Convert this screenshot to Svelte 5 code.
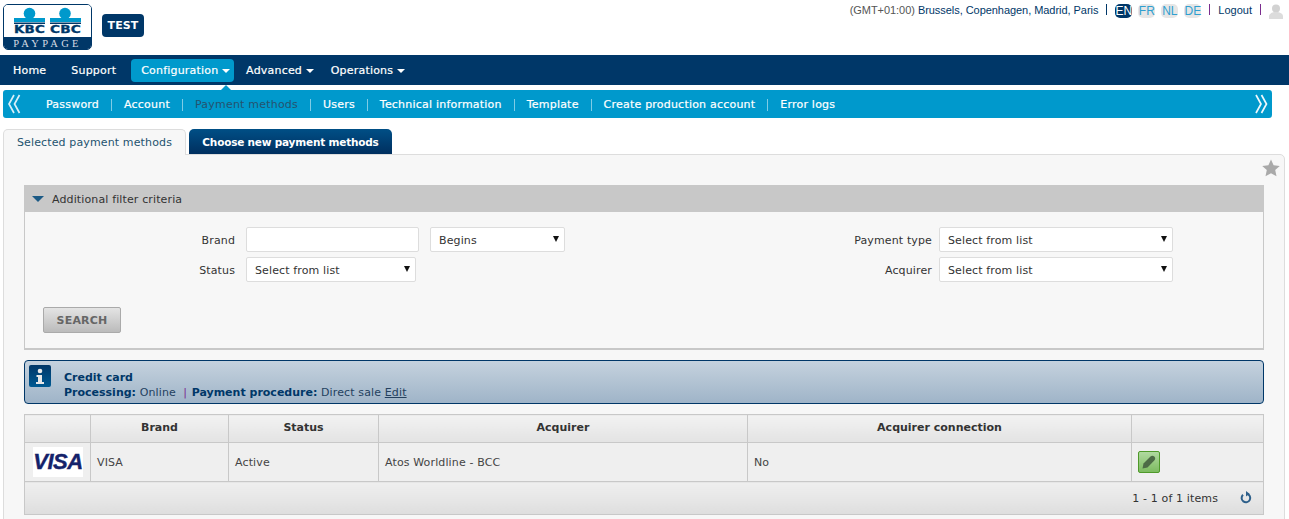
<script>
  const navItems = [
    { label: "Home" },
    { label: "Support" },
    { label: "Configuration", caret: true, active: true },
    { label: "Advanced", caret: true },
    { label: "Operations", caret: true },
  ];
  const subItems = ["Password", "Account", "Payment methods", "Users", "Technical information", "Template", "Create production account", "Error logs"];
  const langs = ["EN", "FR", "NL", "DE"];
</script>

<div class="page">
  <header class="top">
    <div class="logo">
      <div class="logo-white">
        <svg width="87" height="32" viewBox="0 0 87 32">
          <g fill="#0099cc">
            <circle cx="25.500" cy="8.500" r="5.800" />
            <rect x="10" y="13" width="31" height="4" />
            <circle cx="61" cy="8.500" r="5.800" />
            <rect x="46" y="13" width="31" height="4" />
          </g>
          <rect x="10" y="17.500" width="31" height="1.500" fill="#003768" />
          <rect x="46" y="17.500" width="31" height="1.500" fill="#003768" />
          <text class="logo-kbc" x="10" y="27.500" textLength="31" lengthAdjust="spacingAndGlyphs">KBC</text>
          <text class="logo-kbc" x="46" y="27.500" textLength="31" lengthAdjust="spacingAndGlyphs">CBC</text>
        </svg>
      </div>
      <div class="logo-foot">PAYPAGE</div>
    </div>
    <div class="test">TEST</div>
    <div class="user-line">
      <span class="tz"><span class="gmt">(GMT+01:00)</span> Brussels, Copenhagen, Madrid, Paris</span>
      <span class="sep first"></span>
      <span class="langs">
        {#each langs as l, i}
          <span class="lang" class:on={i === 0}>{l}</span>
        {/each}
      </span>
      <span class="sep"></span>
      <span class="logout">Logout</span>
      <span class="sep"></span>
      <svg class="avatar" width="14" height="15" viewBox="0 0 14 15">
        <circle cx="7" cy="4.500" r="4" fill="#d2d2d2" />
        <path d="M0 15 v-2.500 c0-3 3-4.500 7-4.500 s7 1.500 7 4.500 v2.500z" fill="#dcdcdc" />
      </svg>
    </div>
  </header>

  <nav class="nav">
    {#each navItems as item}
      <span class="nav-item" class:active={item.active} class:has-caret={item.caret}>
        {item.label}
        {#if item.caret}<i class="caret"></i>{/if}
        {#if item.active}<i class="pointer"></i>{/if}
      </span>
    {/each}
  </nav>

  <div class="subnav">
    <svg class="chev" width="14" height="20" viewBox="0 0 14 20">
      <path d="M7 1 L2 10 L7 19 M12.500 1 L7.500 10 L12.500 19" fill="none" stroke="#d8eff8" stroke-width="1.700" />
    </svg>
    <div class="sub-items">
      {#each subItems as s, i}
        <span class="sub-item" class:current={i === 2}>{s}</span>
      {/each}
    </div>
    <svg class="chev" width="14" height="20" viewBox="0 0 14 20">
      <path d="M2 1 L7 10 L2 19 M7.500 1 L12.500 10 L7.500 19" fill="none" stroke="#eef8fc" stroke-width="1.700" />
    </svg>
  </div>

  <div class="tabs">
    <div class="tab sel">Selected payment methods</div>
    <div class="tab other">Choose new payment methods</div>
  </div>

  <section class="panel">
    <div class="star-row">
      <svg width="18" height="18" viewBox="0 0 18 18">
        <path d="M9 .5 L11.600 6.200 L17.800 6.900 L13.200 11.100 L14.500 17.300 L9 14.200 L3.500 17.300 L4.800 11.100 L.2 6.900 L6.400 6.200Z" fill="#a9a9a9" />
      </svg>
    </div>

    <div class="filter">
      <div class="filter-head"><i class="tri"></i>Additional filter criteria</div>
      <div class="filter-body">
        <div class="form-grid">
          <div class="form-col left">
            <div class="row">
              <label for="brand">Brand</label>
              <input id="brand" class="field w173" />
              <div class="field select w135">Begins</div>
            </div>
            <div class="row">
              <span class="lbl">Status</span>
              <div class="field select w170">Select from list</div>
            </div>
          </div>
          <div class="form-col right">
            <div class="row">
              <span class="lbl">Payment type</span>
              <div class="field select w234">Select from list</div>
            </div>
            <div class="row">
              <span class="lbl">Acquirer</span>
              <div class="field select w234">Select from list</div>
            </div>
          </div>
        </div>
        <button class="search">SEARCH</button>
      </div>
    </div>

    <div class="info">
      <div class="info-icon">
        <svg width="22" height="22" viewBox="0 0 22 22">
          <defs>
            <linearGradient id="infoBg" x1="0" y1="0" x2="0" y2="1">
              <stop offset="0" stop-color="#003768" />
              <stop offset="1" stop-color="#005a92" />
            </linearGradient>
          </defs>
          <rect width="22" height="22" rx="2" fill="url(#infoBg)" />
          <circle cx="11" cy="6" r="2.300" fill="#e8e8e8" />
          <path d="M7.500 10 h5.500 v7 h2 v2 h-8 v-2 h2 v-5 h-1.500z" fill="#e8e8e8" />
        </svg>
      </div>
      <div class="info-text">
        <div><b>Credit card</b></div>
        <div><b>Processing:</b> Online &nbsp;<span class="pipe">|</span> <b>Payment procedure:</b> Direct sale <u>Edit</u></div>
      </div>
    </div>

    <table class="grid">
      <colgroup>
        <col style="width:66px" /><col style="width:138px" /><col style="width:150px" /><col style="width:369px" /><col style="width:384px" /><col />
      </colgroup>
      <thead>
        <tr>
          <th></th><th>Brand</th><th>Status</th><th>Acquirer</th><th>Acquirer connection</th><th></th>
        </tr>
      </thead>
      <tbody>
        <tr>
          <td class="logo-cell"><div class="visa">VISA</div></td>
          <td>VISA</td>
          <td>Active</td>
          <td>Atos Worldline - BCC</td>
          <td>No</td>
          <td>
            <span class="edit">
              <svg width="14" height="14" viewBox="0 0 14 14">
                <path d="M.5 13.500 L1.500 8.500 L8.500 1.500 C9.700 .4 11 .4 12.300 1.500 C13.500 2.800 13.500 4.200 12.300 5.500 L5.500 12.500Z" fill="#4d6b46" />
              </svg>
            </span>
          </td>
        </tr>
      </tbody>
      <tfoot>
        <tr>
          <td colspan="6">
            <div class="pager">
              <span>1 - 1 of 1 items</span>
              <svg class="refresh" width="14" height="14" viewBox="0 0 14 14">
                <path d="M4 4.800 A4.300 4.300 0 1 0 8 3.800" fill="none" stroke="#2d5f8a" stroke-width="2" />
                <path d="M7 1 L10.500 3.800 L7 6.500Z" fill="#2d5f8a" />
              </svg>
            </div>
          </td>
        </tr>
      </tfoot>
    </table>
  </section>
</div>

<style>
  :global(body) {
    margin: 0;
    background: #fff;
  }
  .page {
    height: 519px;
    overflow: hidden;
    font-family: "DejaVu Sans", Verdana, sans-serif;
    font-size: 11px;
    letter-spacing: .13px;
    color: #333;
  }
  .top {
    height: 55px;
    display: flex;
    align-items: flex-start;
    box-sizing: border-box;
    padding: 4px 0 0 3px;
  }
  .logo {
    width: 89px;
    height: 46px;
    box-sizing: border-box;
    border: 1px solid #003768;
    border-radius: 5px;
    overflow: hidden;
    display: flex;
    flex-direction: column;
  }
  .logo-white {
    height: 32px;
    background: #fff;
  }
  .logo-kbc {
    font: bold 10px "DejaVu Sans", sans-serif;
    fill: #003768;
    stroke: #003768;
    stroke-width: .3px;
  }
  .logo-foot {
    flex: 1;
    background: #003768;
    color: #d7dde5;
    text-align: center;
    font: 10.500px/13px "Liberation Serif", serif;
    letter-spacing: 3.300px;
    white-space: nowrap;
  }
  .test {
    margin: 10px 0 0 10px;
    width: 42px;
    height: 23px;
    border-radius: 4px;
    background: #003768;
    color: #fff;
    font-weight: bold;
    font-size: 11px;
    line-height: 23px;
    text-align: center;
  }
  .user-line {
    margin-left: auto;
    margin-right: 6px;
    margin-top: -3px;
    display: flex;
    align-items: center;
    height: 17px;
    font: 11px "Liberation Sans", Arial, sans-serif;
    letter-spacing: 0;
    color: #003768;
  }
  .tz {
    letter-spacing: -.05px;
  }
  .gmt {
    color: #555;
  }
  .sep {
    width: 1px;
    height: 11px;
    background: #7b2d8e;
    margin: 0 8px;
  }
  .sep.first {
    background: #003768;
  }
  .langs {
    display: flex;
    gap: 6px;
    font-size: 12px;
    margin-top: 2px;
  }
  .lang {
    width: 17px;
    height: 14px;
    line-height: 14px;
    text-align: center;
    border-radius: 5px;
    background: #e6e6e6;
    color: #2f9fd0;
  }
  .lang.on {
    background: #003768;
    color: #fff;
  }
  .avatar {
    margin-top: 3px;
  }
  .nav {
    height: 30px;
    background: #003768;
    display: flex;
    align-items: flex-start;
    padding: 4px 0 0 3px;
    box-sizing: border-box;
    color: #fff;
    font-size: 11px;
    letter-spacing: .2px;
    -webkit-text-stroke: .2px #fff;
  }
  .nav-item {
    position: relative;
    height: 23px;
    line-height: 24px;
    padding: 0 10px;
    margin-right: 5px;
    white-space: nowrap;
    border-radius: 4px;
  }
  .nav-item.has-caret {
    padding-right: 4px;
    margin-right: 3px;
  }
  .nav-item.active {
    background: #0099cc;
    margin-right: 2px;
  }
  .caret {
    display: inline-block;
    vertical-align: 1px;
    border: 4px solid transparent;
    border-top-color: #fff;
    border-bottom: 0;
  }
  .pointer {
    position: absolute;
    left: 90px;
    bottom: -8px;
    border: 5px solid transparent;
    border-bottom-color: #0099cc;
    border-top: 0;
  }
  .subnav {
    margin: 5px 17px 0 3px;
    height: 28px;
    background: #0099cc;
    border-radius: 3px;
    display: flex;
    align-items: center;
    justify-content: space-between;
    padding: 0 4px;
  }
  .sub-items {
    flex: 1;
    display: flex;
    align-items: center;
    padding-left: 25px;
    padding-top: 2px;
    color: #fff;
    letter-spacing: .21px;
    -webkit-text-stroke: .2px #fff;
  }
  .sub-item {
    padding: 0 12px;
    line-height: 12px;
    border-left: 1px solid #7fcce6;
  }
  .sub-item:first-child {
    border-left: 0;
    padding-left: 0;
  }
  .sub-item.current {
    color: #24536f;
    -webkit-text-stroke: 0;
  }
  .tabs {
    display: flex;
    margin: 11px 0 0 3px;
    gap: 3px;
    height: 25px;
    position: relative;
    z-index: 1;
  }
  .tab {
    box-sizing: border-box;
    height: 25px;
    border-radius: 5px 5px 0 0;
    line-height: 25px;
    text-align: center;
  }
  .tab.sel {
    width: 183px;
    height: 26px;
    background: #f7f7f7;
    border: 1px solid #ddd;
    border-bottom: 0;
    color: #24536f;
  }
  .tab.other {
    width: 203px;
    background: linear-gradient(#004f86, #002f5f);
    color: #fff;
    font-weight: bold;
    font-size: 10.500px;
    letter-spacing: -.2px;
    line-height: 26px;
  }
  .panel {
    margin: 0 4px 0 3px;
    box-sizing: border-box;
    height: 380px;
    background: #f7f7f7;
    border: 1px solid #ddd;
    border-radius: 0 5px 0 0;
    padding: 0 20px;
  }
  .star-row {
    height: 30px;
    display: flex;
    justify-content: flex-end;
    align-items: flex-start;
    margin-right: -16px;
    padding-top: 4px;
    box-sizing: border-box;
  }
  .filter {
    height: 165px;
    box-sizing: border-box;
    border: 1px solid #c8c8c8;
    border-bottom-width: 2px;
    border-top: 0;
  }
  .filter-head {
    height: 27px;
    box-sizing: border-box;
    background: #c8c8c8;
    margin: 0 -1px;
    padding: 1px 0 0 8px;
    color: #333;
    display: flex;
    align-items: center;
  }
  .tri {
    border: 6px solid transparent;
    border-top: 6px solid #1c5a85;
    border-bottom: 0;
    margin-right: 8px;
  }
  .filter-body {
    padding: 15px 18px 0;
  }
  .form-grid {
    display: flex;
    height: 80px;
  }
  .form-col {
    display: flex;
    flex-direction: column;
    gap: 5px;
  }
  .form-col.left {
    margin-left: 156px;
    width: 514px;
  }
  .form-col.right {
    width: 446px;
    margin-left: 14px;
  }
  .form-col.right .row {
    justify-content: flex-end;
    gap: 7px;
  }
  .form-col.left label,
  .form-col.left .lbl {
    width: 36px;
    text-align: right;
  }
  .row {
    display: flex;
    align-items: center;
    height: 25px;
    gap: 11px;
  }
  .row label,
  .lbl {
    color: #333;
    white-space: nowrap;
    padding-top: 1px;
  }
  .field {
    box-sizing: border-box;
    height: 25px;
    border: 1px solid #ddd;
    border-radius: 2px;
    background: #fff;
    padding: 0 8px;
    font: inherit;
    color: #333;
  }
  .w173 { width: 173px; }
  .w135 { width: 135px; }
  .w170 { width: 170px; }
  .w234 { width: 234px; }
  .select {
    position: relative;
    line-height: 25px;
  }
  .select::after {
    content: "";
    position: absolute;
    right: 5px;
    top: 8px;
    border: 3.500px solid transparent;
    border-top: 6px solid #111;
    border-bottom: 0;
  }
  .search {
    display: block;
    width: 78px;
    height: 26px;
    padding: 0;
    border: 1px solid #aaa;
    border-radius: 2px;
    background: linear-gradient(#e4e4e4, #bbb);
    color: #666;
    font: bold 11px "DejaVu Sans", sans-serif;
    letter-spacing: .2px;
  }
  .info {
    margin-top: 10px;
    height: 44px;
    box-sizing: border-box;
    border: 1px solid #003768;
    border-radius: 4px;
    background: linear-gradient(#c5d2de, #9fb4c8);
    display: flex;
    padding: 4px 0 0 4px;
    color: #003768;
  }
  .info-icon {
    height: 22px;
  }
  .info-text {
    margin-left: 13px;
    margin-top: 5px;
    line-height: 15px;
    color: #24415f;
  }
  .info-text b {
    color: #003768;
    letter-spacing: 0;
  }
  .pipe {
    color: #7b2d8e;
    margin-right: 1px;
  }
  .grid {
    margin-top: 10px;
    width: 1240px;
    border-collapse: collapse;
    table-layout: fixed;
    border: 1px solid #c8c8c8;
    background: #efefef;
  }
  .grid th,
  .grid td {
    border: 1px solid #c8c8c8;
    padding: 0 6px;
    text-align: left;
    font-weight: normal;
    color: #444;
  }
  .grid th {
    height: 25px;
    padding-bottom: 2px;
    background: linear-gradient(#f2f2f2, #e3e3e3);
    text-align: center;
    font-weight: bold;
    color: #333;
    letter-spacing: 0;
  }
  .grid tbody td {
    height: 38px;
  }
  .grid .logo-cell {
    padding: 0 0 0 8px;
  }
  .visa {
    width: 50px;
    height: 30px;
    background: #fff;
    color: #14226a;
    font: italic bold 22px/30px "Liberation Sans", Arial, sans-serif;
    text-align: center;
    letter-spacing: -.5px;
    -webkit-text-stroke: .4px #14226a;
  }
  .edit {
    width: 22px;
    height: 22px;
    box-sizing: border-box;
    border: 1px solid #4f9a2a;
    border-radius: 2px;
    background: linear-gradient(#b0d9a0, #7dbb60);
    display: flex;
    align-items: center;
    justify-content: center;
  }
  .grid tfoot td {
    height: 32px;
    background: linear-gradient(#efefef, #dedede);
    color: #333;
  }
  .pager {
    display: flex;
    justify-content: flex-end;
    align-items: center;
    gap: 21px;
    padding-right: 4px;
    padding-top: 1px;
  }
  .refresh {
    margin-bottom: 4px;
  }
</style>
